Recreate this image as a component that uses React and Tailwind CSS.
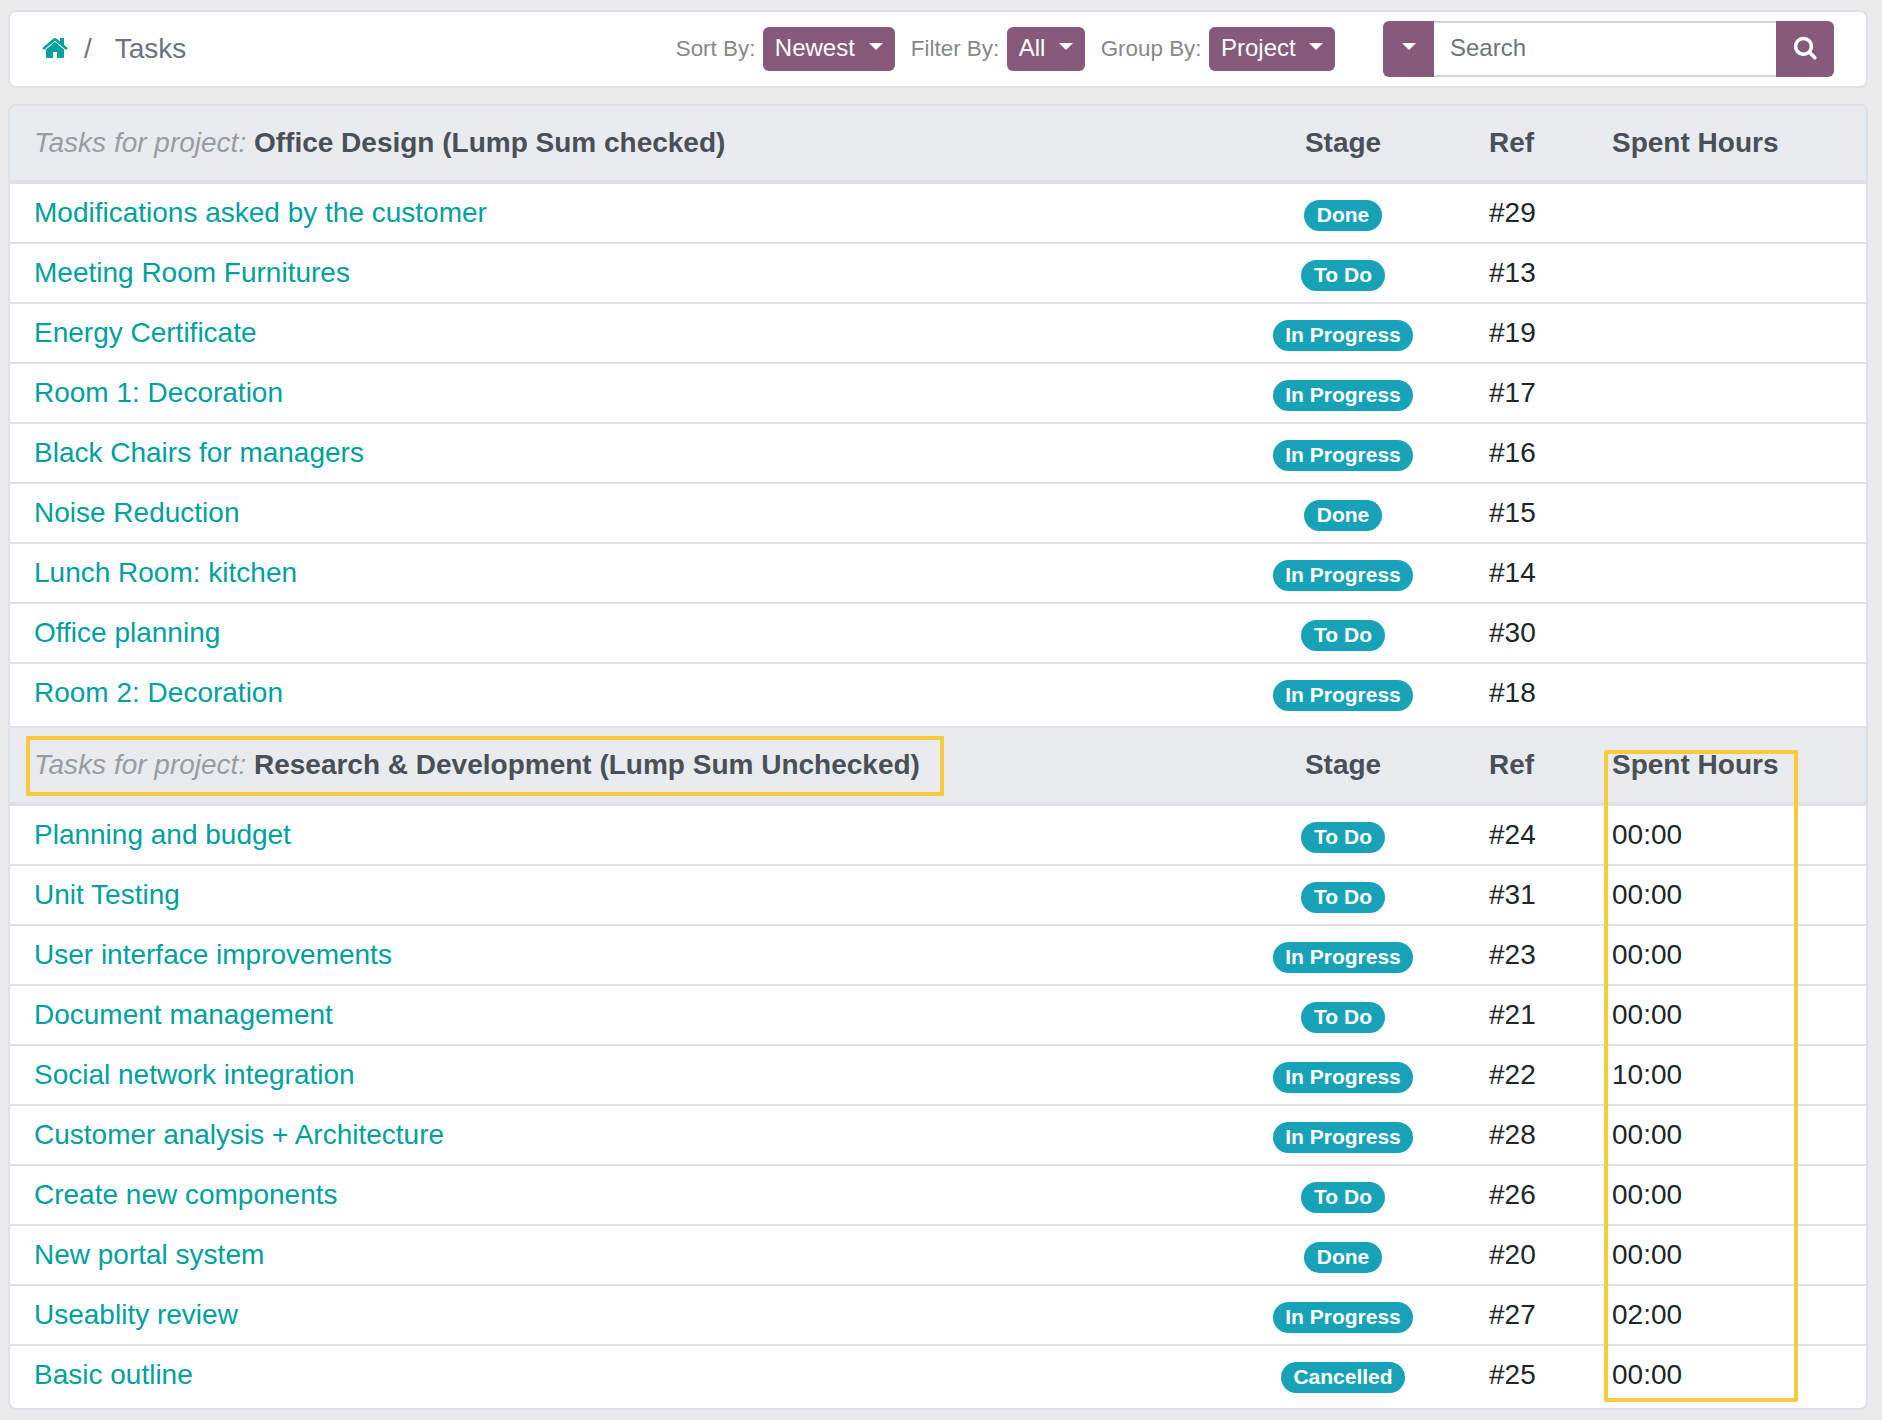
import React from "react";

const groups = [
  {
    project: "Office Design (Lump Sum checked)",
    tasks: [
      ["Modifications asked by the customer", "Done", "#29", ""],
      ["Meeting Room Furnitures", "To Do", "#13", ""],
      ["Energy Certificate", "In Progress", "#19", ""],
      ["Room 1: Decoration", "In Progress", "#17", ""],
      ["Black Chairs for managers", "In Progress", "#16", ""],
      ["Noise Reduction", "Done", "#15", ""],
      ["Lunch Room: kitchen", "In Progress", "#14", ""],
      ["Office planning", "To Do", "#30", ""],
      ["Room 2: Decoration", "In Progress", "#18", ""],
    ],
  },
  {
    project: "Research & Development (Lump Sum Unchecked)",
    highlighted: true,
    tasks: [
      ["Planning and budget", "To Do", "#24", "00:00"],
      ["Unit Testing", "To Do", "#31", "00:00"],
      ["User interface improvements", "In Progress", "#23", "00:00"],
      ["Document management", "To Do", "#21", "00:00"],
      ["Social network integration", "In Progress", "#22", "10:00"],
      ["Customer analysis + Architecture", "In Progress", "#28", "00:00"],
      ["Create new components", "To Do", "#26", "00:00"],
      ["New portal system", "Done", "#20", "00:00"],
      ["Useablity review", "In Progress", "#27", "02:00"],
      ["Basic outline", "Cancelled", "#25", "00:00"],
    ],
  },
];

const columns = "grid grid-cols-[1201px_216px_122px_1fr] pl-6";

function HomeIcon() {
  return (
    <svg viewBox="0 0 1792 1792" fill="currentColor" className="mb-[2px] h-[28px] w-[28px] text-[#00a09d]">
      <path d="M1472 992v480q0 26-19 45t-45 19h-384v-384h-256v384h-384q-26 0-45-19t-19-45v-480q0-1 .5-3t.5-3l575-474 575 474q1 2 1 6zm223-69l-62 74q-8 9-21 11h-3q-13 0-21-7l-692-577-692 577q-12 8-24 7-13-2-21-11l-62-74q-8-10-7-23.5t11-21.5l719-599q32-26 76-26t76 26l244 204v-195q0-14 9-23t23-9h192q14 0 23 9t9 23v408l219 182q10 8 11 21.5t-7 23.5z" />
    </svg>
  );
}

function SearchIcon() {
  return (
    <svg viewBox="0 0 1792 1792" fill="white" className="mb-[3px] h-[24.5px] w-[24.5px]">
      <path d="M1216 832q0-185-131.500-316.500t-316.500-131.500-316.500 131.500-131.500 316.500 131.500 316.500 316.500 131.500 316.500-131.500 131.500-316.500zm512 832q0 52-38 90t-90 38q-54 0-90-38l-343-342q-179 124-399 124-143 0-273.500-55.500t-225-150-150-225-55.500-273.500 55.500-273.500 150-225 225-150 273.500-55.500 273.500 55.500 225 150 150 225 55.500 273.500q0 220-124 399l343 343q37 37 37 90z" />
    </svg>
  );
}

function Caret() {
  return (
    <span className="mb-[3px] h-0 w-0 border-x-[7.35px] border-t-[7.35px] border-x-transparent border-t-white" />
  );
}

function Picker({ label, value, width }) {
  return (
    <div className="flex items-center">
      <span className="mr-[7.5px] text-[22.4px] leading-[44px] text-[#888888]">{label}</span>
      <button className={`${width} flex h-[44px] items-center justify-between rounded-[6px] bg-[#875a7b] pr-[12px] pb-[2px] pl-[12px] text-[24px] text-white`}>
        {value}
        <Caret />
      </button>
    </div>
  );
}

function Toolbar() {
  return (
    <header className="flex h-[78px] items-center rounded-[8px] border-2 border-[#dee2e6] bg-white pr-[32px] pl-[31px]">
      <nav className="flex items-center text-[28px] leading-[42px] text-[#6c757d]">
        <HomeIcon />
        <span className="ml-[15px]">/</span>
        <span className="ml-[23px]">Tasks</span>
      </nav>
      <div className="ml-auto flex items-center gap-[16px]">
        <Picker label="Sort By:" value="Newest" width="w-[132px]" />
        <Picker label="Filter By:" value="All" width="w-[78px]" />
        <Picker label="Group By:" value="Project" width="w-[126px]" />
      </div>
      <div className="ml-[48px] flex h-[56px] w-[451px]">
        <button className="flex w-[51px] items-center justify-center rounded-l-[6px] bg-[#875a7b] pb-[2px]">
          <Caret />
        </button>
        <div className="flex-1 border-y-2 border-[#ced4da] pl-[16px] text-[24px] leading-[50px] text-[#6c757d]">
          Search
        </div>
        <button className="flex w-[58px] items-center justify-center rounded-r-[6px] bg-[#875a7b]">
          <SearchIcon />
        </button>
      </div>
    </header>
  );
}

function Group({ group }) {
  return (
    <section>
      <div className={`${columns} relative h-[78px] border-b-4 border-[#dee2e6] bg-[#e9ecef] text-[28px] leading-[74px] font-bold text-[#495057]`}>
        <div>
          <em className="font-normal text-[#9a9da0]">Tasks for project:</em> {group.project}
        </div>
        <div className="text-center">Stage</div>
        <div className="pl-[38px]">Ref</div>
        <div className="pl-[39px]">Spent Hours</div>
        {group.highlighted && (
          <>
            <div className="absolute top-[8px] left-[16px] h-[60px] w-[918px] rounded-[1px] border-4 border-[#f9ca40]" />
            <div className="absolute top-[22px] left-[1594px] h-[652px] w-[194px] rounded-[2px] border-4 border-[#f9ca40]" />
          </>
        )}
      </div>
      {group.tasks.map(([name, stage, ref, hours]) => (
        <div key={ref} className={`${columns} h-[60px] border-b-2 border-[#dee2e6] text-[28px] leading-[58px] text-[#212529] last:h-[64px]`}>
          <div className="text-[#00a09d]">{name}</div>
          <div className="flex items-start justify-center pt-[16px]">
            <span className="h-[31px] rounded-full bg-[#17a2b8] px-[12.6px] text-[21px] leading-[29px] font-bold text-white">
              {stage}
            </span>
          </div>
          <div className="pl-[38px]">{ref}</div>
          <div className="pl-[39px]">{hours}</div>
        </div>
      ))}
    </section>
  );
}

export default function App() {
  return (
    <div className="h-[1420px] w-[1882px] bg-[#ebebeb] pt-[10px] pr-[14px] pl-[8px] font-['Liberation_Sans',Arial,sans-serif]">
      <Toolbar />
      <main className="mt-4 h-[1306px] overflow-hidden rounded-[8px] border-2 border-[#dee2e6] bg-white">
        {groups.map((group) => (
          <Group key={group.project} group={group} />
        ))}
      </main>
    </div>
  );
}
